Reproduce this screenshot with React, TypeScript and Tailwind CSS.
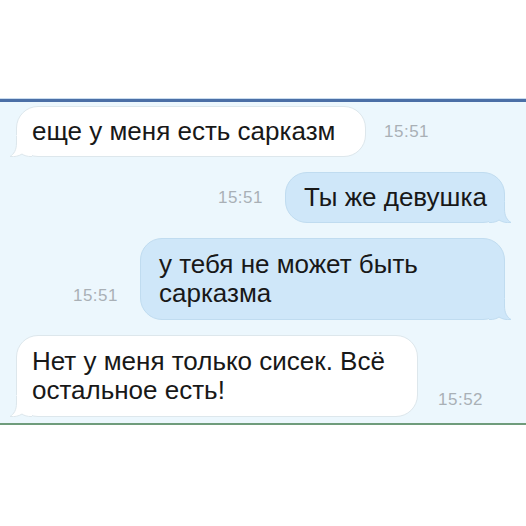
import React from 'react';

type Msg = {
  text: string;
  time: string;
  out: boolean;
  multi?: boolean;
  width?: string;
};

const messages: Msg[] = [
  { text: 'еще у меня есть сарказм', time: '15:51', out: false, width: 'w-[350px]' },
  { text: 'Ты же девушка', time: '15:51', out: true, width: 'w-[220px]' },
  { text: 'у тебя не может быть сарказма', time: '15:51', out: true, multi: true, width: 'w-[365px]' },
  { text: 'Нет у меня только сисек. Всё остальное есть!', time: '15:52', out: false, multi: true, width: 'w-[402px]' },
];

// curled tail on the bottom corner, drawn for the right side and mirrored for incoming
const Tail = ({ out }: { out: boolean }) => {
  const fill = out ? '#cfe7f9' : '#ffffff';
  const stroke = out ? '#c0dcf0' : '#dde7ec';
  return (
    <svg
      className={`absolute bottom-[-1px] ${out ? 'right-[-7px]' : 'left-[-7px] -scale-x-100'}`}
      width="22"
      height="22"
      viewBox="0 0 22 22"
    >
      <path d="M0 0 H15.5 V8 C15.5 15 18 19 22 21.5 C17 22 13 21 10 19 C8 20.5 5 21.6 0 21.6 Z" fill={fill} />
      <path
        d="M15.5 1 V8 C15.5 15 18 19 22 21.5 C17 22 13 21 10 19 C8 20.5 5 21.6 0 21.6"
        fill="none"
        stroke={stroke}
        strokeWidth="1"
      />
    </svg>
  );
};

const Bubble = ({ m }: { m: Msg }) => (
  <div
    className={`relative rounded-[22px] border text-[26px] leading-[29px] text-[#181818] ${
      m.multi ? 'py-[11px]' : 'py-[10px]'
    } ${m.width ?? ''} ${
      m.out ? 'bg-[#cfe7f9] border-[#c0dcf0] pl-[18px] pr-[15px]' : 'bg-white border-[#dde7ec] pl-[15px] pr-[20px]'
    }`}
  >
    <span className="relative z-10">{m.text}</span>
    <Tail out={m.out} />
  </div>
);

const Time = ({ t }: { t: string }) => (
  <span className="text-[17px] text-[#a9b0b6] tracking-[0.5px]">{t}</span>
);

export default function App() {
  return (
    <div
      className="w-[526px] h-[526px] bg-white flex flex-col"
      style={{ fontFamily: '"Liberation Sans", Arial, sans-serif' }}
    >
      <div className="h-[98px] shrink-0" />
      <div className="h-[1px] bg-[#c9dcef]" />
      <div className="h-[3px] bg-[#4b6fa6]" />
      <div className="bg-[#ecf7fd] flex flex-col gap-[15px] pt-[4px] pb-[6px] pl-[16px] pr-[21px]">
        <div className="flex items-center gap-[18px]">
          <Bubble m={messages[0]} />
          <Time t={messages[0].time} />
        </div>
        <div className="flex items-center justify-end gap-[22px]">
          <Time t={messages[1].time} />
          <Bubble m={messages[1]} />
        </div>
        <div className="flex items-end justify-end gap-[22px]">
          <span className="mb-[12px]">
            <Time t={messages[2].time} />
          </span>
          <Bubble m={messages[2]} />
        </div>
        <div className="flex items-end gap-[20px]">
          <Bubble m={messages[3]} />
          <span className="mb-[5px]">
            <Time t={messages[3].time} />
          </span>
        </div>
      </div>
      <div className="h-[2px] bg-[#6f9c7b]" />
      <div className="flex-1 bg-white" />
    </div>
  );
}
